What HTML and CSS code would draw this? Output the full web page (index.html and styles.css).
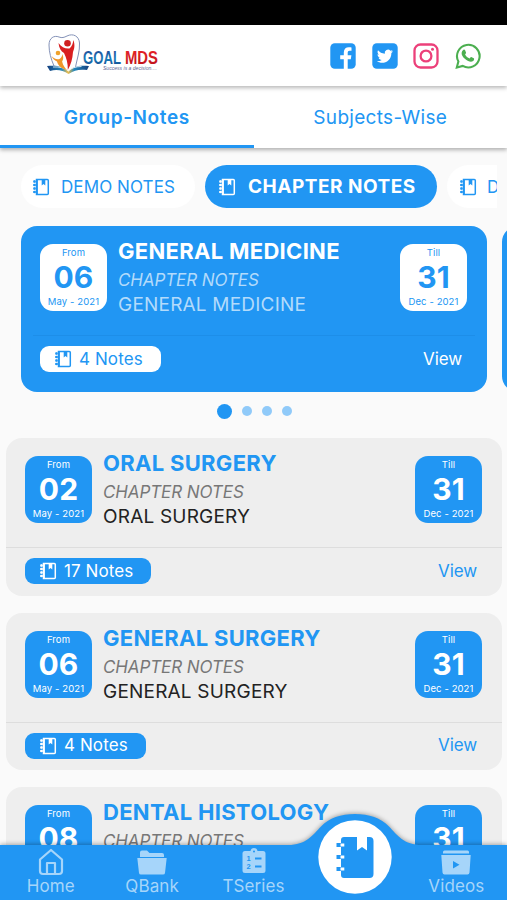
FILE: index.html
```html
<!DOCTYPE html>
<html lang="en">
<head>
<meta charset="utf-8">
<title>Goal MDS</title>
<link rel="stylesheet" href="styles.css">
</head>
<body>
<svg width="0" height="0" class="defs">
  <symbol id="book" viewBox="0 0 18 18">
    <path d="M4.500 1.500h10.800a1 1 0 0 1 1 1v13a1 1 0 0 1-1 1H4.500z" fill="none" stroke="currentColor" stroke-width="1.500"/>
    <path d="M9.700 1.500v6l1.800-1.400 1.800 1.400v-6z" fill="currentColor"/>
    <path d="M1.200 3.500h2.600M1.200 7h2.600M1.200 10.500h2.600M1.200 14h2.600" stroke="currentColor" stroke-width="1.800"/>
    <path d="M2.400 2.300v2.400M2.400 5.800v2.400M2.400 9.300v2.400M2.400 12.800v2.400" stroke="currentColor" stroke-width="1"/>
    <path d="M5.300 2v14" stroke="currentColor" stroke-width="1.200"/>
  </symbol>
</svg>
<div class="app">
  <div class="status"></div>
  <header class="header">
    <svg class="logo" viewBox="0 0 116 42" width="116" height="42">
      <defs>
        <linearGradient id="gb" x1="0" y1="0" x2="0" y2="1"><stop offset="0" stop-color="#243a8c"/><stop offset=".6" stop-color="#197dba"/><stop offset="1" stop-color="#163c82"/></linearGradient>
        <linearGradient id="gr" x1="0" y1="0" x2="0" y2="1"><stop offset="0" stop-color="#f0262c"/><stop offset="1" stop-color="#b9101c"/></linearGradient>
        <linearGradient id="bk"><stop offset="0" stop-color="#15407e"/><stop offset=".35" stop-color="#2187bd"/><stop offset=".5" stop-color="#f4c04a"/><stop offset=".65" stop-color="#2187bd"/><stop offset="1" stop-color="#15407e"/></linearGradient>
      </defs>
      <path d="M9 32C6 25 4 18 4 11 4 4 9 1 14 3c3 1.200 5 .5 8-1 6-3 12 0 12.500 7C35 17 32 25 30.500 33" fill="#fff" stroke="#8492b8" stroke-width="1"/>
      <path d="M2 32c9-1 16 0 21.500 5C28 32 35 31 44 32l-2 4c-7-1-13 0-18.500 4C18 36 11 35 5 37z" fill="url(#bk)"/>
      <path d="M8 33c7-.5 12 1 15.500 4 3-3 7-4.500 13-4.500" fill="none" stroke="#fff" stroke-width=".8"/>
      <circle cx="22.500" cy="9.200" r="3.300" fill="#cf2020"/>
      <path d="M13.500 9c3 4.500 7 6 11 5.500 2.500-2 3.500-5 3.800-8.500 2 5 1 9-.3 12-.5 7-2 12-5.200 18 .2-7-1.400-12-3.800-17-3-1.700-5-5-5.500-10z" fill="#d91f21"/>
      <circle cx="13" cy="19" r="2.300" fill="#f0a22c"/>
      <path d="M6.500 22c2 2.500 5 3.700 8 3 2-1.200 2.600-3 3-5 1.200 4 .8 5.500-.4 7.500 1 4 2.500 6 4.900 8.500-6-1.500-9-4.500-10-8.500-2.500-1-4.500-3-5.500-5.500z" fill="#ef962a"/>
      <text class="logo-word" x="38" y="29.500" textLength="38" lengthAdjust="spacingAndGlyphs" fill="url(#gb)">GOAL</text>
      <text class="logo-word" x="80" y="29.500" textLength="33" lengthAdjust="spacingAndGlyphs" fill="url(#gr)">MDS</text>
      <text class="logo-tag" x="58" y="35.500" textLength="54" lengthAdjust="spacingAndGlyphs">Success is a decision....</text>
    </svg>
    <div class="social">
      <svg viewBox="0 0 26 26"><rect x=".3" y=".3" width="25.400" height="25.400" rx="4.500" fill="#2196f3"/><path d="M13.800 26v-9.800h-3.600v-4h3.600V9.400c0-3.500 2-5.200 5-5.200 1.100 0 2 .1 2.700.2v3.300h-1.900c-1.400 0-1.900.8-1.900 1.900v2.600h3.700l-.6 4h-3.100V26z" fill="#fff"/></svg>
      <svg viewBox="0 0 26 26"><rect x=".3" y=".3" width="25.400" height="25.400" rx="4.500" fill="#2196f3"/><path d="M21 8.200c-.6.300-1.200.5-1.900.5.700-.4 1.200-1 1.400-1.800-.6.400-1.300.6-2.100.8a3.300 3.300 0 0 0-5.600 3C10 10.600 7.600 9.300 6 7.300c-.9 1.500-.4 3.400 1 4.400-.5 0-1-.2-1.500-.4 0 1.600 1.100 3 2.600 3.300-.5.100-1 .2-1.500.1.400 1.300 1.600 2.200 3.100 2.300A6.700 6.700 0 0 1 4.900 18.300c5.700 3.600 14.500.5 14.500-8.400.6-.5 1.200-1 1.600-1.700z" fill="#fff"/></svg>
      <svg viewBox="0 0 26 26" fill="none" stroke="#ec407a" stroke-width="2.300"><rect x="1.500" y="1.500" width="23" height="23" rx="6"/><circle cx="13" cy="13" r="5.400"/><circle cx="19.500" cy="6.300" r="1.500" fill="#ec407a" stroke="none"/></svg>
      <svg viewBox="0 0 26 26"><path d="M1.800 24.500l1.600-6A11.300 11.300 0 1 1 7.700 22.900z" fill="none" stroke="#4caf50" stroke-width="2.100"/><path d="M8.500 6.700c.5-.3 1.200-.2 1.500.4l1 2.400c.1.400 0 .7-.9 1.900.9 1.900 2.500 3.200 4.600 4 1-1.400 1.200-1.500 1.600-1.400l2.500 1.200c.7.400.2 2.200-.7 2.900-1.500 1-3.300.7-5-.1-2.300-1-4.500-2.900-5.800-5.200-1.100-1.900-1-4.600 1.200-6.100z" fill="#4caf50"/></svg>
    </div>
  </header>
  <nav class="tabs">
    <div class="tab active"><span>Group-Notes</span></div>
    <div class="tab"><span>Subjects-Wise</span></div>
  </nav>
  <div class="chips">
    <div class="chip"><svg class="book"><use href="#book"/></svg><span>DEMO NOTES</span></div>
    <div class="chip selected"><svg class="book"><use href="#book"/></svg><span>CHAPTER NOTES</span></div>
    <div class="chip"><svg class="book"><use href="#book"/></svg><span>D</span></div>
  </div>
  <div class="carousel">
    <article class="card feature">
      <div class="card-head">
        <div class="date"><small>From</small><b>06</b><small>May - 2021</small></div>
        <div class="info"><h2>GENERAL MEDICINE</h2><em>CHAPTER NOTES</em><p>GENERAL MEDICINE</p></div>
        <div class="date"><small>Till</small><b>31</b><small>Dec - 2021</small></div>
      </div>
      <div class="card-foot"><div class="pill"><svg class="book"><use href="#book"/></svg><span>4 Notes</span></div><a>View</a></div>
    </article>
    <article class="card feature"></article>
  </div>
  <div class="dots"><i class="on"></i><i></i><i></i><i></i></div>
  <main class="list">
    <article class="card">
      <div class="card-head">
        <div class="date"><small>From</small><b>02</b><small>May - 2021</small></div>
        <div class="info"><h2>ORAL SURGERY</h2><em>CHAPTER NOTES</em><p>ORAL SURGERY</p></div>
        <div class="date"><small>Till</small><b>31</b><small>Dec - 2021</small></div>
      </div>
      <div class="card-foot"><div class="pill"><svg class="book"><use href="#book"/></svg><span>17 Notes</span></div><a>View</a></div>
    </article>
    <article class="card">
      <div class="card-head">
        <div class="date"><small>From</small><b>06</b><small>May - 2021</small></div>
        <div class="info"><h2>GENERAL SURGERY</h2><em>CHAPTER NOTES</em><p>GENERAL SURGERY</p></div>
        <div class="date"><small>Till</small><b>31</b><small>Dec - 2021</small></div>
      </div>
      <div class="card-foot"><div class="pill"><svg class="book"><use href="#book"/></svg><span>4 Notes</span></div><a>View</a></div>
    </article>
    <article class="card">
      <div class="card-head">
        <div class="date"><small>From</small><b>08</b></div>
        <div class="info"><h2>DENTAL HISTOLOGY</h2><em>CHAPTER NOTES</em></div>
        <div class="date"><small>Till</small><b>31</b></div>
      </div>
    </article>
  </main>
  <nav class="bottom">
    <svg class="bottom-bg" viewBox="0 0 507 90" width="507" height="90">
      <path d="M0 35H288C306 35 313 25 321 16.500 329 8 341 4 355 4S381 8 389 16.500C397 25 404 35 422 35H507V90H0z" fill="#2196f3"/>
      <circle cx="355" cy="47" r="36.700" fill="#fff"/>
      <g fill="#2196f3"><path d="M344 27h13v13.500l5-3.500 5 3.500V27h2.500a4 4 0 0 1 4 4v33a4 4 0 0 1-4 4H344a3 3 0 0 1-3-3V30a3 3 0 0 1 3-3z"/>
      <path d="M336.500 33h8v4h-8zM336.500 45h8v4h-8zM336.500 57h8v4h-8z"/></g>
      <g fill="#fff"><path d="M340.500 33.500h3.800v3h-3.800zM340.500 45.500h3.800v3h-3.800zM340.500 57.500h3.800v3h-3.800z"/></g>
    </svg>
    <div class="item"><svg viewBox="0 0 30 28"><path d="M4 11.500L15 2l11 9.500V23a3 3 0 0 1-3 3H7a3 3 0 0 1-3-3zM11 26V15h8v11" fill="none" stroke="currentColor" stroke-width="2.200" stroke-linejoin="round"/></svg><span>Home</span></div>
    <div class="item"><svg viewBox="0 0 30 28" fill="currentColor"><path d="M3 9V4.500Q3 2.500 5 2.500h5l2.500 2.500H25q2 0 2 2v2zM.3 10h29.400L28 25q-.2 1.500-2 1.500H4q-1.800 0-2-1.500z"/></svg><span>QBank</span></div>
    <div class="item"><svg viewBox="0 0 30 28"><path d="M6 3h5.500Q12 0 15 0t3.500 3H24q2.500 0 2.500 2.500v17Q26.500 25 24 25H6q-2.500 0-2.500-2.500v-17Q3.500 3 6 3z" fill="currentColor"/><path d="M16 10.500h6.500M16 18.500h6.500" stroke="#2196f3" stroke-width="2"/><circle cx="15" cy="3.500" r="1" fill="#2196f3"/><g class="nums"><text x="7.500" y="13">1</text><text x="7.500" y="21">2</text></g></svg><span>TSeries</span></div>
    <div class="item"></div>
    <div class="item"><svg viewBox="0 0 30 28"><path d="M3.500 2.500h23q1.500 0 1.500 1.500v1.500H2V4Q2 2.500 3.500 2.500zM.3 7h29.400L28.500 24.500q-.2 2-2 2h-23q-1.800 0-2-2z" fill="currentColor"/><path d="M12 13v7.500l6.500-3.700z" fill="#2196f3"/></svg><span>Videos</span></div>
  </nav>
</div>
</body>
</html>
```
FILE: styles.css
```css
* { box-sizing: border-box; margin: 0; padding: 0; }
body { font-family: Inter, "Liberation Sans", sans-serif; background: #fafafa; color: #2196f3; }
.defs { display: block; position: absolute; }
.app { width: 507px; height: 900px; overflow: hidden; position: relative; display: flex; flex-direction: column; }
.app > * { flex-shrink: 0; }
.status { height: 25px; background: #000; }
.header { height: 61px; background: #fff; display: flex; justify-content: space-between; align-items: center; padding: 1px 26px 0 45px; box-shadow: 0 2px 4px rgba(0,0,0,.28); position: relative; z-index: 2; }
.logo { margin-bottom: 3px; overflow: visible; }
.logo-word { font: 700 18.500px "Liberation Sans", sans-serif; }
.logo-tag { font: italic 5.500px "Liberation Sans", sans-serif; fill: #5c6694; }
.social { display: flex; gap: 15.600px; }
.social svg { width: 26px; height: 26px; }
.tabs { height: 62px; background: #fff; display: flex; box-shadow: 0 2px 4px rgba(0,0,0,.3); position: relative; z-index: 1; }
.tab { flex: 1; display: flex; align-items: center; justify-content: center; font-size: 19px; letter-spacing: .3px; border-bottom: 3px solid transparent; padding-top: 4px; }
.tab.active { font-weight: 600; letter-spacing: .6px; border-color: #2196f3; }
.chips { display: flex; gap: 10px; height: 43px; margin: 17px 10px 0 21px; overflow: hidden; }
.chip { display: flex; flex: none; align-items: center; width: 174px; padding-left: 11px; background: #fff; border-radius: 22px; font-size: 17px; letter-spacing: .1px; white-space: nowrap; }
.chip .book { margin-right: 11px; }
.chip.selected { width: 232px; background: #2196f3; color: #fff; font-weight: 700; padding-left: 13px; font-size: 19px; letter-spacing: .5px; }
.chip.selected .book { margin-right: 12px; }
.chip:last-child { width: 50px; padding-left: 12px; border-radius: 22px 0 0 22px; }
.chip:last-child .book { margin-right: 10px; }
.book { width: 18px; height: 18px; flex: none; }
.carousel { display: flex; gap: 15px; margin: 18px 0 0 21px; overflow: hidden; }
.card { height: 157.500px; background: #eee; border-radius: 16px; }
.card-head { display: flex; height: 110px; padding: 12px 20px 0 19px; border-bottom: 1px solid #ddd; }
.date { width: 67px; height: 67px; margin-top: 6px; border-radius: 13px; background: #2196f3; color: #fff; display: flex; flex-direction: column; align-items: center; flex: none; }
.date small { font-size: 9.500px; line-height: 12px; letter-spacing: .1px; padding-top: 3px; height: 15px; white-space: nowrap; }
.date b { font-size: 30px; line-height: 37px; height: 37px; font-weight: 700; letter-spacing: .2px; }
.date small:last-child { padding-top: 0; }
.info { flex: 1; margin-left: 11px; white-space: nowrap; }
.info h2 { font-size: 22px; line-height: 26px; font-weight: 700; letter-spacing: .3px; }
.info em { display: block; font-size: 17px; line-height: 22px; margin-top: 5px; color: #777; letter-spacing: -.1px; }
.info p { font-size: 19px; line-height: 24px; margin-top: 2px; color: #222; letter-spacing: .2px; }
.card-foot { display: flex; justify-content: space-between; align-items: center; height: 26px; margin: 10px 25px 0 19px; font-size: 17px; line-height: 24px; letter-spacing: .1px; }
.card-foot span, .card-foot a { padding-bottom: 1px; }
.card-foot a { letter-spacing: -.1px; }
.pill { height: 26px; border-radius: 9px; background: #2196f3; color: #fff; display: flex; align-items: center; padding: 0 18px 0 14px; }
.pill .book { margin-right: 7px; }
.card.feature { width: 466px; height: 166px; flex: none; background: #2196f3; color: #fff; }
.feature .card-head { border-color: transparent; background: linear-gradient(#1d8ee9, #1d8ee9) 12px 109px / 442px 1px no-repeat border-box; }
.feature .date, .feature .pill { background: #fff; color: #2196f3; }
.feature .info em, .feature .info p { color: #b3dbfb; }
.dots { height: 14px; margin-top: 12px; display: flex; align-items: center; justify-content: center; gap: 9.700px; padding-left: 2px; }
.dots i { width: 10px; height: 10px; border-radius: 50%; background: #90caf9; }
.dots .on { width: 15px; height: 15px; background: #2196f3; }
.list { margin: 20px 5px 0 6px; display: flex; flex-direction: column; gap: 17.200px; }
.bottom { position: absolute; left: 0; bottom: 0; width: 507px; height: 55px; display: flex; z-index: 3; }
.bottom-bg { position: absolute; left: 0; bottom: 0; filter: drop-shadow(0 -1px 2px rgba(0,0,0,.3)); }
.item { position: relative; flex: 1; display: flex; flex-direction: column; align-items: center; color: #a6d5fa; font-size: 17px; line-height: 22px; letter-spacing: .1px; padding-top: 3px; }
.item svg { width: 30px; height: 28px; }
.item span { margin-top: -1px; }
.nums { font: 700 7.500px "Liberation Sans", sans-serif; fill: #2196f3; letter-spacing: 0; }
```
